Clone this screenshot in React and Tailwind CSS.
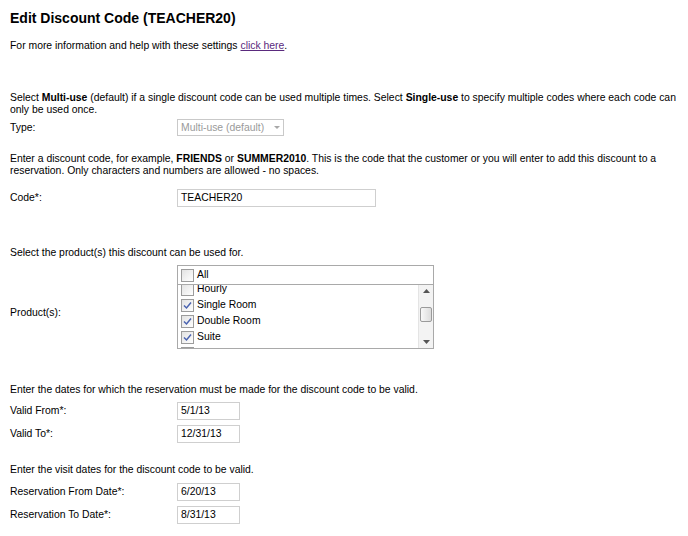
import React from "react";

const Box = ({ checked }) => (
  <span className="inline-flex w-[13px] h-[13px] border border-[#9c9c9c] bg-gradient-to-br from-[#e2e2e2] to-white items-center justify-center mr-[3px] shrink-0">
    {checked && (
      <svg width="9" height="9" viewBox="0 0 9 9">
        <path d="M1 4.5 L3.5 7 L8 1.5" fill="none" stroke="#4a63b0" strokeWidth="1.5" />
      </svg>
    )}
  </span>
);

const Row = ({ label, children, className = "", labelClass = "" }) => (
  <div className={`flex ${className}`}>
    <div className={`w-[167px] ${labelClass}`}>{label}</div>
    {children}
  </div>
);

const TextBox = ({ value, w }) => (
  <div className={`${w} h-[18px] border border-[#cfcfcf] flex items-center px-[3px]`}>{value}</div>
);

export default function App() {
  const products = [
    { name: "Hourly", checked: false },
    { name: "Single Room", checked: true },
    { name: "Double Room", checked: true },
    { name: "Suite", checked: true },
  ];

  return (
    <div className="w-[688px] h-[536px] bg-white text-black font-['Liberation_Sans',Arial,sans-serif] text-[10.4px] leading-[12px] pl-[10px] pr-[4px] pt-[10px] overflow-hidden">
      <h1 className="text-[14px] font-bold leading-[18px] -mt-[1px]">Edit Discount Code (TEACHER20)</h1>
      <p className="mt-[13px]">
        For more information and help with these settings{" "}
        <span className="text-[#5a2a7d] underline">click here</span>.
      </p>

      <p className="mt-[40px]">
        Select <b>Multi-use</b> (default) if a single discount code can be used multiple times. Select <b>Single-use</b> to specify multiple codes where each code can only be used once.
      </p>
      <Row label="Type:" className="mt-[3px] items-center">
        <div className="w-[107px] h-[17px] border border-[#c9c9c9] flex items-center justify-between px-[3px] text-[#9a9a9a]">
          <span>Multi-use (default)</span>
          <svg width="6" height="3" viewBox="0 0 6 3"><path d="M0 0 H6 L3 3 Z" fill="#a8a8a8" /></svg>
        </div>
      </Row>

      <p className="mt-[17px]">
        Enter a discount code, for example, <b>FRIENDS</b> or <b>SUMMER2010</b>. This is the code that the customer or you will enter to add this discount to a reservation. Only characters and numbers are allowed - no spaces.
      </p>
      <Row label="Code*:" className="mt-[12px] items-center">
        <TextBox value="TEACHER20" w="w-[199px]" />
      </Row>

      <p className="mt-[40px]">Select the product(s) this discount can be used for.</p>
      <Row label="Product(s):" className="mt-[6px] items-start" labelClass="pt-[42px]">
        <div className="w-[257px]">
          <div className="h-[20px] border border-[#a9a9a9] flex items-center px-[3px]">
            <Box /> All
          </div>
          <div className="h-[64px] border border-[#a9a9a9] border-t-0 flex">
            <div className="flex-1 px-[3px] overflow-hidden">
              <div className="-mt-[4px]">
                {products.map((p) => (
                  <div key={p.name} className="flex items-center h-[16px]">
                    <Box checked={p.checked} /> {p.name}
                  </div>
                ))}
                <div className="flex items-center h-[16px]">
                  <Box />
                </div>
              </div>
            </div>
            <div className="w-[15px] bg-[#f3f3f3] border-l border-[#e4e4e4] flex flex-col items-center justify-between py-[4px]">
              <svg width="7" height="4" viewBox="0 0 7 4"><path d="M0 4 H7 L3.5 0 Z" fill="#555" /></svg>
              <div className="w-[12px] h-[15px] border border-[#9a9a9a] bg-gradient-to-r from-[#f8f8f8] to-[#dcdcdc] rounded-[2px] -mt-[4px]" />
              <svg width="7" height="4" viewBox="0 0 7 4"><path d="M0 0 H7 L3.5 4 Z" fill="#555" /></svg>
            </div>
          </div>
        </div>
      </Row>

      <p className="mt-[35px]">Enter the dates for which the reservation must be made for the discount code to be valid.</p>
      <Row label="Valid From*:" className="mt-[6px] items-center">
        <TextBox value="5/1/13" w="w-[63px]" />
      </Row>
      <Row label="Valid To*:" className="mt-[5px] items-center">
        <TextBox value="12/31/13" w="w-[63px]" />
      </Row>

      <p className="mt-[21px]">Enter the visit dates for the discount code to be valid.</p>
      <Row label="Reservation From Date*:" className="mt-[7px] items-center">
        <TextBox value="6/20/13" w="w-[63px]" />
      </Row>
      <Row label="Reservation To Date*:" className="mt-[5px] items-center">
        <TextBox value="8/31/13" w="w-[63px]" />
      </Row>
    </div>
  );
}
